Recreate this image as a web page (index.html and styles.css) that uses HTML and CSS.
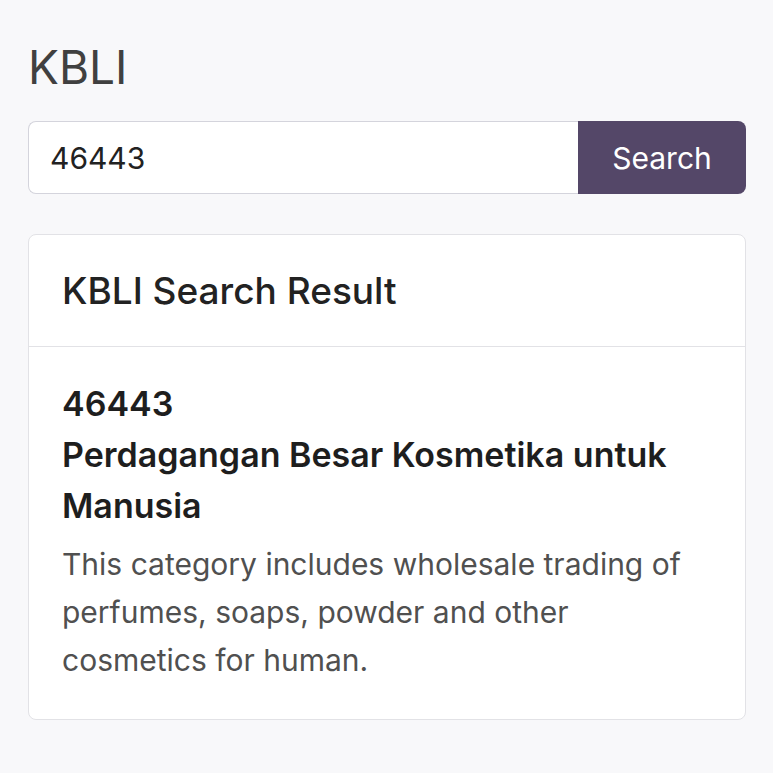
FILE: index.html
```html
<!DOCTYPE html>
<html lang="en">
<head>
<meta charset="utf-8">
<title>KBLI</title>
<link rel="stylesheet" href="styles.css">
</head>
<body>
<main class="page">
  <h1 class="page-title">KBLI</h1>
  <form class="search-group">
    <input class="search-input" type="text" value="46443">
    <button class="search-btn" type="button">Search</button>
  </form>
  <section class="card">
    <header class="card-header">
      <h2 class="card-title">KBLI Search Result</h2>
    </header>
    <div class="card-body">
      <h3 class="result-code">46443</h3>
      <h3 class="result-name">Perdagangan Besar Kosmetika untuk Manusia</h3>
      <p class="result-desc">This category includes wholesale trading of perfumes, soaps, powder and other cosmetics for human.</p>
    </div>
  </section>
</main>
</body>
</html>
```

FILE: styles.css
```css
* { box-sizing: border-box; }
html, body {
  margin: 0;
  background: #f8f8fa;
  font-family: Inter, "Noto Sans", "Liberation Sans", sans-serif;
}
.page {
  padding: 40px 27px 0 28px;
  display: flex;
  flex-direction: column;
}
.page-title {
  margin: 0;
  font-size: 46px;
  font-weight: 400;
  line-height: 55px;
  color: #404040;
}
.search-group {
  margin: 26px 0 0;
  display: flex;
  height: 73px;
}
.search-input {
  flex: 1;
  min-width: 0;
  border: 1px solid #d4d4dc;
  border-right: none;
  border-radius: 8px 0 0 8px;
  background: #fff;
  padding: 0 21px;
  font-family: inherit;
  font-size: 30px;
  color: #222;
  outline: none;
}
.search-btn {
  width: 168px;
  border: none;
  border-radius: 0 8px 8px 0;
  background: #544768;
  color: #fff;
  font-family: inherit;
  font-size: 30px;
  font-weight: 400;
  padding: 0;
}
.card {
  margin-top: 40px;
  background: #fff;
  border: 1px solid #e2e2e6;
  border-radius: 8px;
}
.card-header {
  border-bottom: 1px solid #e2e2e6;
  padding: 0 33px;
  height: 112px;
  display: flex;
  align-items: center;
}
.card-title {
  margin: 0;
  font-size: 37px;
  font-weight: 500;
  color: #222;
}
.card-body {
  padding: 31px 33px 35px;
}
.result-code, .result-name {
  margin: 0;
  font-size: 34px;
  font-weight: 600;
  line-height: 51px;
  color: #1e1e1e;
}
.result-desc {
  margin: 9px 0 0;
  font-size: 30px;
  line-height: 48px;
  color: #505050;
}
```
